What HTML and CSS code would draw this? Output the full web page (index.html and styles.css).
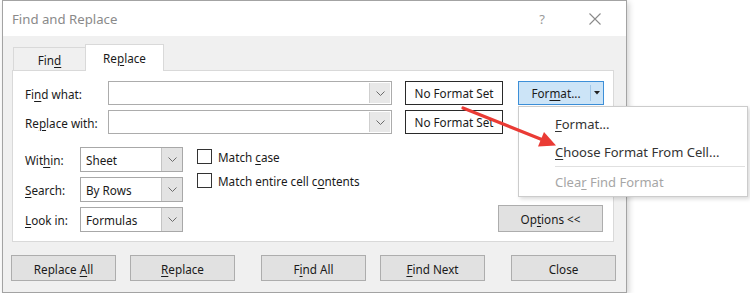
FILE: index.html
```html
<!DOCTYPE html>
<html>
<head>
<meta charset="utf-8">
<link rel="stylesheet" href="styles.css">
</head>
<body>
<div class="dialog">
  <div class="titlebar">
    <span class="title">Find and Replace</span>
    <span class="tb-help">?</span>
    <svg class="tb-close" width="12" height="12" viewBox="0 0 12 12"><path d="M0.5 0.5 L11.5 11.5 M11.5 0.5 L0.5 11.5" stroke="#8a8a8a" stroke-width="1.1" fill="none"/></svg>
  </div>
  <div class="tabs">
    <div class="tab"><span>Fin<u>d</u></span></div>
    <div class="tab active"><span>Re<u>p</u>lace</span></div>
  </div>
  <div class="panel">
    <div class="toprows">
      <div class="row">
        <span class="label">Fi<u>n</u>d what:</span>
        <div class="combo wide"><span class="ctext"></span><span class="cbtn"><svg width="9" height="5" viewBox="0 0 9 5"><path d="M0.5 0.5 L4.5 4.5 L8.5 0.5" stroke="#6a6a6a" fill="none"/></svg></span></div>
        <div class="nfs"><span>No Format Set</span></div>
        <div class="fmtbtn"><span class="fmtmain"><span>For<u>m</u>at...</span></span><span class="fmtarrow"><svg width="6" height="4" viewBox="0 0 6 4"><path d="M0 0 L6 0 L3 3.5 Z" fill="#222"/></svg></span></div>
      </div>
      <div class="row">
        <span class="label">Re<u>p</u>lace with:</span>
        <div class="combo wide"><span class="ctext"></span><span class="cbtn"><svg width="9" height="5" viewBox="0 0 9 5"><path d="M0.5 0.5 L4.5 4.5 L8.5 0.5" stroke="#6a6a6a" fill="none"/></svg></span></div>
        <div class="nfs"><span>No Format Set</span></div>
      </div>
    </div>
    <div class="lower">
      <div class="opts">
        <span class="label2">Wit<u>h</u>in:</span>
        <div class="combo small"><span class="ctext">Sheet</span><span class="cbtn gray"><svg width="9" height="5" viewBox="0 0 9 5"><path d="M0.5 0.5 L4.5 4.5 L8.5 0.5" stroke="#6a6a6a" fill="none"/></svg></span></div>
        <span class="label2"><u>S</u>earch:</span>
        <div class="combo small"><span class="ctext">By Rows</span><span class="cbtn gray"><svg width="9" height="5" viewBox="0 0 9 5"><path d="M0.5 0.5 L4.5 4.5 L8.5 0.5" stroke="#6a6a6a" fill="none"/></svg></span></div>
        <span class="label2"><u>L</u>ook in:</span>
        <div class="combo small"><span class="ctext">Formulas</span><span class="cbtn gray"><svg width="9" height="5" viewBox="0 0 9 5"><path d="M0.5 0.5 L4.5 4.5 L8.5 0.5" stroke="#6a6a6a" fill="none"/></svg></span></div>
      </div>
      <div class="checks">
        <label class="check"><span class="box"></span><span>Match <u>c</u>ase</span></label>
        <label class="check"><span class="box"></span><span>Match entire cell c<u>o</u>ntents</span></label>
      </div>
      <div class="btn options"><span>Op<u>t</u>ions &lt;&lt;</span></div>
    </div>
  </div>
  <div class="buttons">
    <div class="btn"><span>Replace <u>A</u>ll</span></div>
    <div class="btn"><span><u>R</u>eplace</span></div>
    <div class="btn far"><span>F<u>i</u>nd All</span></div>
    <div class="btn"><span><u>F</u>ind Next</span></div>
    <div class="btn far"><span>Close</span></div>
  </div>
</div>

<div class="menu">
  <div class="item"><span><u>F</u>ormat...</span></div>
  <div class="item"><span><u>C</u>hoose Format From Cell...</span></div>
  <div class="sep"></div>
  <div class="item disabled"><span>Clea<u>r</u> Find Format</span></div>
</div>

<svg class="arrow" width="750" height="293" viewBox="0 0 750 293">
  <line x1="463" y1="108" x2="543" y2="140" stroke="#ea3b35" stroke-width="3.2" stroke-linecap="round"/>
  <polygon points="556,145.5 538,146.5 544,132" fill="#ea3b35"/>
</svg>
</body>
</html>
```

FILE: styles.css
```css
html, body {
  margin: 0;
  padding: 0;
  background: #ffffff;
}
body {
  width: 750px;
  height: 293px;
  overflow: hidden;
  font-family: "Noto Sans", "Open Sans", sans-serif;
  font-size: 11.7px;
  color: #1a1a1a;
}
u {
  text-decoration: underline;
  text-underline-offset: 2px;
  text-decoration-thickness: 1px;
}
.dialog {
  margin-left: 2px;
  width: 623px;
  height: 291px;
  border: 1px solid #a3a3a3;
  background: #f0f0f0;
  box-shadow: 2px 2px 6px rgba(0,0,0,0.18);
  display: flex;
  flex-direction: column;
}
.titlebar {
  height: 35px;
  background: #ffffff;
  display: flex;
  align-items: center;
  padding-left: 9px;
  flex: none;
}
.title {
  font-size: 13.2px;
  color: #8a8a8a;
}
.tb-help {
  margin-left: auto;
  font-size: 13px;
  color: #9a9a9a;
  width: 10px;
  text-align: center;
}
.tb-close {
  margin-left: 42px;
  margin-right: 25px;
}
.tabs {
  display: flex;
  align-items: flex-end;
  height: 35px;
  padding-left: 10px;
  margin-bottom: -1px;
  flex: none;
}
.tab {
  width: 72px;
  height: 24px;
  box-sizing: border-box;
  border: 1px solid #d9d9d9;
  border-right: none;
  border-bottom: none;
  display: flex;
  align-items: center;
  justify-content: center;
  padding-top: 1px;
}
.tab.active {
  width: 79px;
  height: 27px;
  background: #ffffff;
  border-right: 1px solid #d9d9d9;
  position: relative;
  z-index: 1;
  padding-top: 0;
  padding-bottom: 1px;
}
.panel {
  margin-left: 9px;
  width: 600px;
  height: 170px;
  border: 1px solid #d9d9d9;
  background: #ffffff;
  flex: none;
  display: flex;
  flex-direction: column;
}
.toprows {
  padding: 10px 0 0 12px;
  display: flex;
  flex-direction: column;
  gap: 5px;
}
.row {
  display: flex;
  align-items: center;
  height: 24px;
}
.label {
  width: 83px;
  flex: none;
  padding-top: 1px;
}
.combo {
  display: flex;
  box-sizing: border-box;
  border: 1px solid #acacac;
  background: #ffffff;
}
.combo.wide {
  width: 284px;
  height: 24px;
}
.ctext {
  flex: 1;
  display: flex;
  align-items: center;
  padding-left: 5px;
}
.cbtn {
  width: 20px;
  flex: none;
  display: flex;
  align-items: center;
  justify-content: center;
  background: #e8e8e8;
  border-left: 1px solid #cfcfcf;
  margin: 1px;
}
.cbtn.gray {
  margin: 0;
  background: #e3e3e3;
  border-left: 1px solid #c4c4c4;
}
.nfs {
  margin-left: 13px;
  width: 98px;
  height: 24px;
  box-sizing: border-box;
  border: 1px solid #2a2a2a;
  display: flex;
  align-items: center;
  justify-content: center;
}
.fmtbtn {
  margin-left: 15px;
  width: 86px;
  height: 24px;
  box-sizing: border-box;
  border: 1px solid #3c8fd8;
  background: #cce4f7;
  display: flex;
}
.fmtmain {
  flex: 1;
  display: flex;
  align-items: center;
  justify-content: center;
  padding-left: 3px;
}
.fmtarrow {
  width: 12px;
  border-left: 1px solid #9fc6e8;
  margin: 3px 0;
  display: flex;
  align-items: center;
  justify-content: center;
}
.lower {
  display: flex;
  padding: 13px 10px 10px 12px;
  flex: 1;
  box-sizing: border-box;
}
.opts {
  display: grid;
  grid-template-columns: 55px 103px;
  grid-auto-rows: 25px;
  row-gap: 5px;
  align-items: center;
  align-self: flex-start;
}
.label2 {
  padding-top: 1px;
}
.combo.small {
  width: 103px;
  height: 25px;
  border-color: #a8a8a8;
}
.checks {
  margin-left: 14px;
  display: flex;
  flex-direction: column;
  gap: 9px;
  padding-top: 2px;
}
.check {
  display: flex;
  align-items: center;
  height: 15px;
  gap: 6px;
}
.box {
  width: 15px;
  height: 15px;
  box-sizing: border-box;
  border: 1px solid #333333;
  background: #ffffff;
  flex: none;
}
.btn {
  width: 105px;
  height: 26px;
  box-sizing: border-box;
  border: 1px solid #adadad;
  background: #e1e1e1;
  display: flex;
  align-items: center;
  justify-content: center;
  padding-top: 1px;
  flex: none;
}
.btn.options {
  margin-left: auto;
  align-self: flex-end;
  height: 27px;
}
.buttons {
  display: flex;
  margin-top: 13px;
  padding-left: 8px;
  gap: 14px;
}
.btn.far {
  margin-left: 12px;
}
.menu {
  position: absolute;
  left: 518px;
  top: 106px;
  width: 230px;
  height: 91px;
  box-sizing: border-box;
  border: 1px solid #cccccc;
  background: #ffffff;
  box-shadow: 2px 2px 4px rgba(0,0,0,0.15);
  padding-top: 3px;
  font-size: 13px;
  color: #333333;
}
.item {
  height: 28px;
  display: flex;
  align-items: center;
  padding-left: 36px;
}
.item.disabled {
  color: #a6a6a6;
}
.sep {
  height: 1px;
  background: #e0e0e0;
  margin: 0 2px 1px 36px;
}
.arrow {
  position: absolute;
  left: 0;
  top: 0;
  pointer-events: none;
}
```
